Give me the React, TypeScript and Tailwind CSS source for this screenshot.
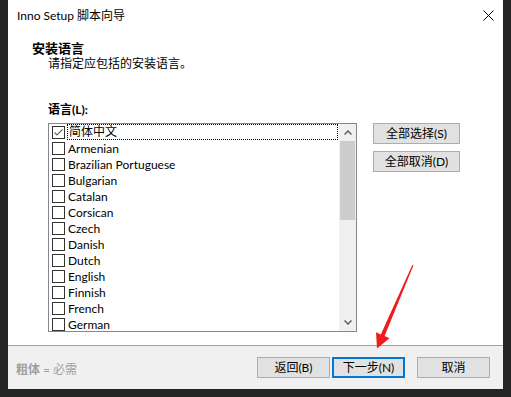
import React from 'react';

const languages = [
  '简体中文',
  'Armenian',
  'Brazilian Portuguese',
  'Bulgarian',
  'Catalan',
  'Corsican',
  'Czech',
  'Danish',
  'Dutch',
  'English',
  'Finnish',
  'French',
  'German',
];

function Checkbox({ checked }: { checked: boolean }) {
  return (
    <span className="w-[13px] h-[13px] shrink-0 border border-[#333333] bg-white flex items-center justify-center">
      {checked && (
        <svg width="11" height="11" viewBox="0 0 11 11">
          <polyline points="1.5,5.5 4,8 9.5,2.5" fill="none" stroke="#6a6a6a" strokeWidth="1.2" />
        </svg>
      )}
    </span>
  );
}

function Button({ label, primary, className }: { label: string; primary?: boolean; className?: string }) {
  return (
    <button
      className={
        'h-[21px] bg-[#e1e1e1] text-[12px] text-black flex items-center justify-center leading-none ' +
        (primary ? 'border-2 border-[#0078d7] ' : 'border border-[#adadad] ') +
        (className ?? '')
      }
    >
      {label}
    </button>
  );
}

export default function App() {
  return (
    <div className="relative w-[511px] h-[397px] bg-[#252525] px-2 pb-2 font-['Lato','Noto_Sans_CJK_SC',sans-serif] text-black">
      <div className="h-full bg-white flex flex-col">
        {/* Title bar */}
        <div className="h-[30px] shrink-0 flex items-center justify-between pl-[9px] pr-[9px] pt-px text-[12px]">
          <span>Inno Setup 脚本向导</span>
          <svg width="11" height="11" viewBox="0 0 11 11">
            <path d="M0.5 0.5 L10.5 10.5 M10.5 0.5 L0.5 10.5" stroke="#000" strokeWidth="1" />
          </svg>
        </div>

        {/* Page body */}
        <div className="flex-1 flex flex-col">
          <div className="pt-[10px] pl-6 text-[13px] font-bold leading-4">安装语言</div>
          <div className="pl-10 text-[12px] leading-4">请指定应包括的安装语言。</div>

          <div className="pl-10 mt-[30px] text-[12px] font-bold leading-4">语言(L):</div>

          <div className="pl-10 mt-[5px] flex items-start">
            {/* Language list */}
            <div className="w-[309px] h-[209px] border border-[#828790] flex overflow-hidden">
              <div className="flex-1 overflow-hidden">
                {languages.map((lang, i) => (
                  <div key={lang} className="h-4 flex items-center">
                    <span className="ml-[3px]">
                      <Checkbox checked={i === 0} />
                    </span>
                    {i === 0 ? (
                      <span className="ml-[2px] mr-px flex-1 h-4 border border-dotted border-black pl-px text-[12px] leading-[14px]">
                        {lang}
                      </span>
                    ) : (
                      <span className="ml-[3px] pt-px text-[12px] leading-4">{lang}</span>
                    )}
                  </div>
                ))}
              </div>
              {/* Scrollbar */}
              <div className="w-[17px] h-full bg-[#f0f0f0] flex flex-col">
                <div className="h-[17px] flex items-center justify-center">
                  <svg width="8" height="5" viewBox="0 0 8 5">
                    <path d="M0.5 4.5 L4 1 L7.5 4.5" fill="none" stroke="#606060" strokeWidth="1.5" />
                  </svg>
                </div>
                <div className="mx-px h-[79px] bg-[#cdcdcd]" />
                <div className="flex-1" />
                <div className="h-[17px] flex items-center justify-center">
                  <svg width="8" height="5" viewBox="0 0 8 5">
                    <path d="M0.5 0.5 L4 4 L7.5 0.5" fill="none" stroke="#606060" strokeWidth="1.5" />
                  </svg>
                </div>
              </div>
            </div>

            {/* Side buttons */}
            <div className="ml-4 flex flex-col gap-[7px]">
              <Button label="全部选择(S)" className="w-[87px]" />
              <Button label="全部取消(D)" className="w-[87px]" />
            </div>
          </div>
        </div>

        {/* Footer */}
        <div className="h-[44px] shrink-0 border-t border-[#a0a0a0] bg-[#f0f0f0] flex items-center pl-2 pr-[13px]">
          <span className="mt-[5px] text-[12px] text-[#a0a0a0]">
            <span className="font-bold">粗体</span> = 必需
          </span>
          <div className="ml-auto flex items-center">
            <Button label="返回(B)" className="w-[73px]" />
            <Button label="下一步(N)" primary className="w-[73px] ml-[2px]" />
            <Button label="取消" className="w-[73px] ml-3" />
          </div>
        </div>
      </div>

      {/* Red annotation arrow */}
      <svg className="absolute inset-0 pointer-events-none" width="511" height="397" viewBox="0 0 511 397">
        <polygon
          points="412.4,264.8 413.4,265.6 384.6,336 389.5,338.2 377,348.5 376,332.2 380.8,334.4"
          fill="#ee1c1c"
        />
      </svg>
    </div>
  );
}
